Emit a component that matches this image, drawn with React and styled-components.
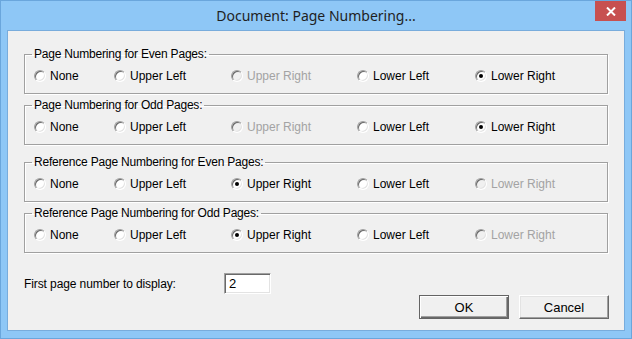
import React from "react";
import styled, { createGlobalStyle, css } from "styled-components";

const GlobalStyle = createGlobalStyle`
  html, body {
    margin: 0;
    padding: 0;
    background: #8ec7f6;
  }
`;

const groups = [
  { title: "Page Numbering for Even Pages:", checked: 4, disabled: 2, top: 16 },
  { title: "Page Numbering for Odd Pages:", checked: 4, disabled: 2, top: 4 },
  { title: "Reference Page Numbering for Even Pages:", checked: 2, disabled: 4, top: 10 },
  { title: "Reference Page Numbering for Odd Pages:", checked: 2, disabled: 4, top: 4 },
];

const options = ["None", "Upper Left", "Upper Right", "Lower Left", "Lower Right"];

const Window = styled.div`
  width: 632px;
  height: 339px;
  box-sizing: border-box;
  background: #8ec7f6;
  border: 1px solid #6aa6dc;
  display: flex;
  flex-direction: column;
  overflow: hidden;
`;

const TitleBar = styled.div`
  height: 29px;
  display: grid;
  grid-template-columns: 1fr auto 1fr;
  align-items: center;
`;

const Title = styled.div`
  grid-column: 2;
  font-family: "Noto Sans", sans-serif;
  font-size: 14px;
  color: #1f1f1f;
`;

const CloseButton = styled.div`
  grid-column: 3;
  justify-self: end;
  align-self: start;
  width: 31px;
  height: 20px;
  margin-right: 5px;
  background: #c75050;
  display: flex;
  align-items: center;
  justify-content: center;
`;

const Client = styled.div`
  flex: 1;
  margin: 0 6px 7px 6px;
  border: 1px solid #78acdc;
  background: #f0f0f0;
  padding: 0 16px;
  display: flex;
  flex-direction: column;
  font-family: "Liberation Sans", Arial, sans-serif;
  font-size: 12px;
  color: #000;
`;

const Group = styled.fieldset`
  margin: ${(p) => p.$top}px 0 0 0;
  padding: 0 0 9px 0;
  border: 1px solid #a0a0a0;
  box-shadow: 1px 1px 0 #fff, inset 1px 1px 0 #fff;
  min-width: 0;
`;

const Legend = styled.legend`
  margin-left: 7px;
  padding: 0 2px;
  line-height: 14px;
  height: 14px;
  letter-spacing: -0.2px;
`;

const OptionRow = styled.div`
  display: grid;
  grid-template-columns: 80px 117px 126px 118px 1fr;
  margin-top: 7px;
  padding-left: 9px;
  height: 16px;
  align-items: center;
`;

const Option = styled.label`
  display: flex;
  align-items: center;
  gap: 4px;
  color: ${(p) => (p.$disabled ? "#a3a3a3" : "#000")};
  white-space: nowrap;
`;

const Radio = styled.span`
  width: 12px;
  height: 12px;
  box-sizing: border-box;
  border-radius: 50%;
  border: 1px solid;
  border-color: #a0a0a0 #fff #fff #a0a0a0;
  box-shadow: inset 1px 1px 0 #696969, inset -1px -1px 0 #e3e3e3;
  background: ${(p) => (p.$disabled ? "#f0f0f0" : "#fff")};
  position: relative;
  flex-shrink: 0;
  ${(p) =>
    p.$checked &&
    css`
      &::after {
        content: "";
        position: absolute;
        left: 3px;
        top: 3px;
        width: 4px;
        height: 4px;
        border-radius: 50%;
        background: #000;
      }
    `}
`;

const NumberRow = styled.div`
  display: flex;
  align-items: center;
  margin-top: 20px;
  height: 21px;
`;

const FieldLabel = styled.span`
  width: 200px;
  letter-spacing: -0.1px;
`;

const NumberInput = styled.div`
  width: 47px;
  height: 21px;
  box-sizing: border-box;
  background: #fff;
  border: 1px solid;
  border-color: #a0a0a0 #fff #fff #a0a0a0;
  box-shadow: inset 1px 1px 0 #696969, inset -1px -1px 0 #e3e3e3;
  padding-left: 4px;
  display: flex;
  align-items: center;
  font-size: 13px;
`;

const ButtonRow = styled.div`
  display: flex;
  justify-content: flex-end;
  gap: 10px;
  margin-top: 1px;
  margin-right: -1px;
`;

const Button = styled.div`
  width: 90px;
  height: 24px;
  box-sizing: border-box;
  display: flex;
  align-items: center;
  justify-content: center;
  background: #f0f0f0;
  font-size: 13px;
  border: 1px solid;
  border-color: #fff #696969 #696969 #fff;
  box-shadow: inset -1px -1px 0 #a0a0a0, inset 1px 1px 0 #e3e3e3;
  ${(p) =>
    p.$default &&
    css`
      border: 1px solid #646464;
      box-shadow: inset 1px 1px 0 #fff, inset -1px -1px 0 #696969,
        inset -2px -2px 0 #a0a0a0;
    `}
`;

export default function App() {
  return (
    <>
      <GlobalStyle />
      <Window>
        <TitleBar>
          <Title>Document: Page Numbering...</Title>
          <CloseButton>
            <svg width="10" height="9" viewBox="0 0 10 9">
              <path d="M1 0.5 L9 8.5 M9 0.5 L1 8.5" stroke="#fff" strokeWidth="2" />
            </svg>
          </CloseButton>
        </TitleBar>
        <Client>
          {groups.map((g, gi) => (
            <Group key={gi} $top={g.top}>
              <Legend>{g.title}</Legend>
              <OptionRow>
                {options.map((o, i) => (
                  <Option key={o} $disabled={i === g.disabled}>
                    <Radio $checked={i === g.checked} $disabled={i === g.disabled} />
                    {o}
                  </Option>
                ))}
              </OptionRow>
            </Group>
          ))}
          <NumberRow>
            <FieldLabel>First page number to display:</FieldLabel>
            <NumberInput>2</NumberInput>
          </NumberRow>
          <ButtonRow>
            <Button $default>OK</Button>
            <Button>Cancel</Button>
          </ButtonRow>
        </Client>
      </Window>
    </>
  );
}
